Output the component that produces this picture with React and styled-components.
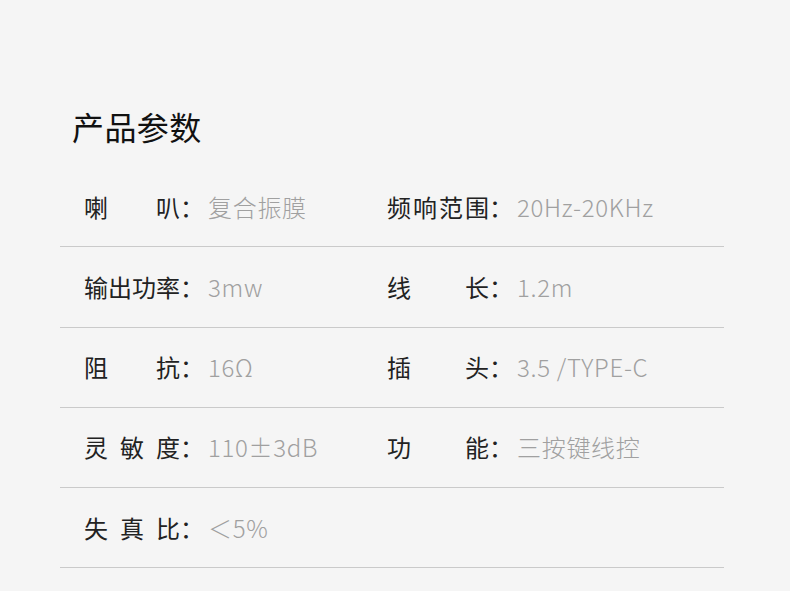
import React from 'react'
import styled, { createGlobalStyle } from 'styled-components'

const specs = [
  [['喇叭', '复合振膜'], ['频响范围', '20Hz-20KHz']],
  [['输出功率', '3mw'], ['线长', '1.2m']],
  [['阻抗', '16Ω'], ['插头', '3.5 /TYPE-C']],
  [['灵敏度', '110±3dB'], ['功能', '三按键线控']],
  [['失真比', '＜5%'], null],
]

function App() {
  return (
    <>
      <GlobalStyle />
      <Page>
        <Title>产品参数</Title>
        <Table>
          {specs.map((row, i) => (
            <Row key={i}>
              {row.map((cell, j) => (
                <Cell key={j}>
                  {cell && (
                    <>
                      <Label $width={j === 0 ? 96 : 102}>{cell[0]}</Label>
                      <Colon>：</Colon>
                      <Value>{cell[1]}</Value>
                    </>
                  )}
                </Cell>
              ))}
            </Row>
          ))}
        </Table>
      </Page>
    </>
  )
}

export default App

const GlobalStyle = createGlobalStyle`
  html, body {
    margin: 0;
    background: #f5f5f5;
  }
  body {
    font-family: "Noto Sans CJK SC", "Noto Sans", sans-serif;
  }
`

const Page = styled.div`
  width: 790px;
  height: 591px;
  padding: 106px 66px 0 60px;
  box-sizing: border-box;
  overflow: hidden;
`

const Title = styled.h1`
  margin: 0 0 21px 12px;
  font-size: 32px;
  line-height: 40px;
  font-weight: 400;
  letter-spacing: 0.4px;
  color: #111;
`

const Table = styled.div`
  display: flex;
  flex-direction: column;
`

const Row = styled.div`
  display: grid;
  grid-template-columns: 303px 1fr;
  height: 79.25px;
  padding-left: 24px;
  border-bottom: 1px solid #cacaca;
  align-items: center;
`

const Cell = styled.div`
  display: flex;
  align-items: center;
  font-size: 24px;
  line-height: 32px;
`

const Label = styled.span`
  width: ${p => p.$width}px;
  text-align: justify;
  text-align-last: justify;
  color: #222;
  white-space: nowrap;
`

const Colon = styled.span`
  width: 28px;
  color: #222;
`

const Value = styled.span`
  color: #a0a0a0;
  font-weight: 300;
  letter-spacing: 0.7px;
  white-space: nowrap;
`
